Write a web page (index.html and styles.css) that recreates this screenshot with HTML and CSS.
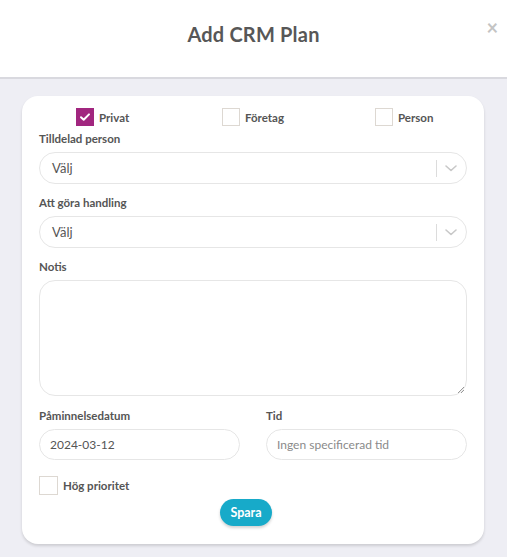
FILE: index.html
```html
<!DOCTYPE html>
<html lang="sv">
<head>
<meta charset="utf-8">
<title>Add CRM Plan</title>
<link rel="stylesheet" href="styles.css">
</head>
<body>
<header class="modal-header">
  <h1 class="modal-title">Add CRM Plan</h1>
  <span class="close">&#215;</span>
</header>
<main class="modal-body">
  <form class="card">
    <div class="type-row">
      <label class="check-item"><span class="box checked"><svg viewBox="0 0 18 18" width="18" height="18"><path d="M5 9.2l2.7 2.6L13 6.4" fill="none" stroke="#fff" stroke-width="2" stroke-linecap="round" stroke-linejoin="round"/></svg></span><span class="check-label">Privat</span></label>
      <label class="check-item"><span class="box"></span><span class="check-label">Företag</span></label>
      <label class="check-item"><span class="box"></span><span class="check-label">Person</span></label>
    </div>

    <div class="field">
      <div class="label">Tilldelad person</div>
      <div class="select">
        <span class="select-value">Välj</span>
        <span class="sep"></span>
        <svg class="chev" viewBox="0 0 14 10" width="14" height="10"><path d="M2 3l5 4.5L12 3" fill="none" stroke="#c8c8c8" stroke-width="1.6" stroke-linecap="round" stroke-linejoin="round"/></svg>
      </div>
    </div>

    <div class="field">
      <div class="label">Att göra handling</div>
      <div class="select">
        <span class="select-value">Välj</span>
        <span class="sep"></span>
        <svg class="chev" viewBox="0 0 14 10" width="14" height="10"><path d="M2 3l5 4.5L12 3" fill="none" stroke="#c8c8c8" stroke-width="1.6" stroke-linecap="round" stroke-linejoin="round"/></svg>
      </div>
    </div>

    <div class="field">
      <div class="label">Notis</div>
      <div class="textarea">
        <svg class="grip" viewBox="0 0 10 10" width="10" height="10"><path d="M9 3L3 9M9 6L6 9" stroke="#999" stroke-width="1" fill="none"/></svg>
      </div>
    </div>

    <div class="two-col">
      <div class="col">
        <div class="label">Påminnelsedatum</div>
        <div class="input">2024-03-12</div>
      </div>
      <div class="col">
        <div class="label">Tid</div>
        <div class="input placeholder">Ingen specificerad tid</div>
      </div>
    </div>

    <label class="check-item priority"><span class="box"></span><span class="check-label">Hög prioritet</span></label>

    <div class="actions">
      <button type="button" class="btn">Spara</button>
    </div>
  </form>
</main>
</body>
</html>
```

FILE: styles.css
```css
html, body {
  margin: 0;
  padding: 0;
}
body {
  background: #eeeef4;
  font-family: "Lato", "Open Sans", sans-serif;
  color: #555;
  width: 507px;
  height: 557px;
  overflow: hidden;
}
.modal-header {
  position: relative;
  height: 77px;
  background: #fff;
  border-bottom: 2px solid #d9d9df;
  display: flex;
  align-items: center;
  justify-content: center;
}
.modal-title {
  margin: 0;
  font-size: 20px;
  font-weight: 700;
  color: #575757;
  letter-spacing: 0.2px;
  padding-bottom: 9px;
}
.close {
  position: absolute;
  right: 9px;
  top: 15px;
  font-size: 20px;
  color: #c4c4c4;
  font-weight: 700;
  line-height: 24px;
}
.modal-body {
  padding: 17px 23px 0 22px;
}
.card {
  background: #fff;
  border-radius: 16px;
  box-shadow: 0 2px 3px rgba(0,0,0,0.14);
  padding: 12px 17px 17px 17px;
  height: 419px;
}
.type-row {
  display: grid;
  grid-template-columns: 146px 153px auto;
  justify-items: start;
  padding-left: 37px;
}
.check-item {
  display: flex;
  align-items: center;
  gap: 5px;
}
.box {
  width: 16px;
  height: 16px;
  border: 1px solid #ddd8d2;
  background: #fff;
  display: block;
}
.box.checked {
  background: #a1267f;
  border-color: #a1267f;
  width: 18px;
  height: 18px;
  border: 0;
}
.box svg { display: block; }
.check-label {
  font-size: 11.5px;
  font-weight: 700;
  color: #555;
}
.field {
  margin-top: 6px;
}
.field + .field {
  margin-top: 12px;
}
.label {
  font-size: 11.5px;
  font-weight: 700;
  color: #555;
  line-height: 14px;
  margin-bottom: 6px;
}
.select {
  height: 30px;
  border: 1px solid #e6e6e6;
  border-radius: 16px;
  display: flex;
  align-items: center;
  padding: 0 8px 0 12px;
}
.select-value {
  flex: 1;
  font-size: 13px;
  color: #555;
}
.sep {
  width: 1px;
  height: 17px;
  background: #dcdcdc;
  margin-right: 7px;
}
.chev { display: block; }
.textarea {
  position: relative;
  height: 114px;
  border: 1px solid #e6e6e6;
  border-radius: 16px;
}
.grip {
  position: absolute;
  right: 1px;
  bottom: 1px;
}
.two-col {
  display: grid;
  grid-template-columns: 201px 201px;
  justify-content: space-between;
  margin-top: 13px;
}
.input {
  height: 29px;
  border: 1px solid #e6e6e6;
  border-radius: 16px;
  display: flex;
  align-items: center;
  padding-left: 10px;
  font-size: 12px;
  color: #555;
}
.input.placeholder {
  color: #8a8a8a;
}
.priority {
  margin-top: 16px;
}
.priority .box {
  width: 17px;
  height: 17px;
}
.actions {
  display: flex;
  justify-content: center;
  margin-top: 4px;
  padding-right: 14px;
}
.btn {
  background: #17aac9;
  color: #fff;
  border: 0;
  border-radius: 14px;
  height: 27px;
  padding: 0 10px;
  font-family: inherit;
  font-size: 12.5px;
  font-weight: 700;
  box-shadow: 0 2px 3px rgba(0,0,0,0.18);
}
```
